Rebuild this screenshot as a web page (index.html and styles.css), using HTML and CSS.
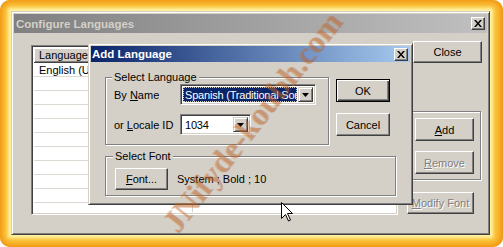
FILE: index.html
```html
<!DOCTYPE html>
<html lang="en">
<head>
    <meta charset="UTF-8">
    <meta name="viewport" content="width=device-width, initial-scale=1.0">
    <title>Configure Languages</title>
    <link rel="stylesheet" href="styles.css">
</head>
<body>
    <div class="frame">
        <div class="window">
            <div class="titlebar inactive">
                <span>Configure Languages</span>
                <span class="cap-btn">
                    <svg width="8" height="7" viewBox="0 0 8 7"><path d="M0 0h2l2 2.5L6 0h2L5 3.5 8 7H6L4 4.5 2 7H0l3-3.5z"/></svg>
                </span>
            </div>
            <div class="window-body">
                <div class="listview">
                    <div class="list-header">
                        <span class="col col-lang">Language</span>
                        <span class="col col-font">Font</span>
                    </div>
                    <div class="list-rows">
                        <div class="row">English (United States)</div>
                    </div>
                </div>
                <div class="side">
                    <button class="btn btn-close">Close</button>
                    <div class="group side-group">
                        <button class="btn btn-side"><u>A</u>dd</button>
                        <button class="btn btn-side btn-remove" disabled><u>R</u>emove</button>
                    </div>
                    <button class="btn btn-modify" disabled><u>M</u>odify Font</button>
                </div>
            </div>
        </div>

        <div class="dialog">
            <div class="titlebar active">
                <span>Add Language</span>
                <span class="cap-btn">
                    <svg width="8" height="7" viewBox="0 0 8 7"><path d="M0 0h2l2 2.5L6 0h2L5 3.5 8 7H6L4 4.5 2 7H0l3-3.5z"/></svg>
                </span>
            </div>
            <div class="dialog-body">
                <div class="top-row">
                    <div class="group lang-group">
                        <span class="group-title">Select Language</span>
                        <div class="field">
                            <span class="label">By <u>N</u>ame</span>
                            <div class="combo combo-name">
                                <span class="combo-text selected">Spanish (Traditional Sort)</span>
                                <span class="combo-arrow"><svg width="7" height="4" viewBox="0 0 7 4"><path d="M0 0h7L3.5 4z"/></svg></span>
                            </div>
                        </div>
                        <div class="field field-locale">
                            <span class="label">or <u>L</u>ocale ID</span>
                            <div class="combo combo-locale">
                                <span class="combo-text">1034</span>
                                <span class="combo-arrow"><svg width="7" height="4" viewBox="0 0 7 4"><path d="M0 0h7L3.5 4z"/></svg></span>
                            </div>
                        </div>
                    </div>
                    <div class="dialog-buttons">
                        <button class="btn btn-default">OK</button>
                        <button class="btn btn-cancel">Cancel</button>
                    </div>
                </div>
                <div class="group font-group">
                    <span class="group-title">Select Font</span>
                    <div class="font-row">
                        <button class="btn btn-font"><u>F</u>ont...</button>
                        <span class="font-desc">System ; Bold ; 10</span>
                    </div>
                </div>
            </div>
        </div>

        <span class="watermark">JNifyde-koubh.com</span>

        <svg class="cursor" width="12" height="20" viewBox="0 0 12 20">
            <path d="M0.5 0.5V16.5L4.5 12.5L7.5 19L9.5 18L6.5 11.5H11.5Z" fill="#fff" stroke="#000"/>
        </svg>
    </div>
</body>
</html>
```

FILE: styles.css
```css
body {
    margin: 0;
    font-family: "Liberation Sans", Arial, sans-serif;
    font-size: 11px;
    color: #000;
    background: #fff;
}
.frame {
    position: relative;
    width: 503px;
    height: 247px;
    box-sizing: border-box;
    padding: 11px 13px 12px 11px;
    background: #f7ac24;
    border-radius: 10px;
    box-shadow: inset 0 0 5px 2px #ef8f0c;
    overflow: hidden;
}
.window {
    height: 100%;
    box-sizing: border-box;
    display: flex;
    flex-direction: column;
    padding: 2px;
    background: #d4d0c8;
    border: 1px solid;
    border-color: #d4d0c8 #404040 #404040 #d4d0c8;
    box-shadow: inset 1px 1px 0 #fff, inset -1px -1px 0 #808080,
        0 0 3px 3px #fff1a0, 0 0 8px 6px #fcd04c;
}
.titlebar {
    display: flex;
    align-items: center;
    justify-content: space-between;
    font-weight: bold;
    font-size: 11.5px;
}
.inactive {
    height: 19px;
    padding: 0 2px 0 2px;
    background: linear-gradient(to right, #808080, #c0c0c0);
    color: #d4d0c8;
}
.active {
    height: 16px;
    padding: 0 2px 0 1px;
    background: linear-gradient(to right, #0a246a, #a6caf0);
    color: #fff;
}
.cap-btn {
    width: 14px;
    height: 13px;
    box-sizing: border-box;
    display: flex;
    align-items: center;
    justify-content: center;
    background: #d4d0c8;
    border: 1px solid;
    border-color: #fff #404040 #404040 #fff;
    box-shadow: inset -1px -1px 0 #808080;
}
.window-body {
    display: flex;
    align-items: flex-start;
    padding: 8px 0 0 17px;
}
.listview {
    width: 367px;
    height: 170px;
    margin-top: 4px;
    box-sizing: border-box;
    display: flex;
    flex-direction: column;
    background: #fff;
    border: 1px solid;
    border-color: #808080 #fff #fff #808080;
    box-shadow: inset 1px 1px 0 #404040, inset -1px -1px 0 #d4d0c8;
    padding: 2px;
}
.list-header {
    display: flex;
    height: 15px;
}
.col {
    box-sizing: border-box;
    display: flex;
    align-items: center;
    padding-left: 5px;
    background: #d4d0c8;
    border-right: 1px solid #404040;
    border-bottom: 1px solid #404040;
    box-shadow: inset 1px 1px 0 #fff, inset -1px -1px 0 #808080;
}
.col-lang {
    width: 159px;
}
.col-font {
    flex: 1;
}
.list-rows {
    flex: 1;
    background-image:
        linear-gradient(#d4d0c8, #d4d0c8),
        repeating-linear-gradient(to bottom, transparent 0 13px, #dcd9d2 13px 14px);
    background-size: 1px 100%, 100% 100%;
    background-position: 158px 0, 0 0;
    background-repeat: no-repeat;
}
.row {
    height: 14px;
    line-height: 14px;
    padding-left: 5px;
    white-space: nowrap;
}
.side {
    display: flex;
    flex-direction: column;
    align-items: flex-start;
    width: 75px;
    margin-left: 9px;
}
.btn {
    box-sizing: border-box;
    display: flex;
    align-items: center;
    justify-content: center;
    padding: 0;
    font: inherit;
    color: #000;
    background: #d4d0c8;
    border: 1px solid;
    border-color: #fff #404040 #404040 #fff;
    box-shadow: inset -1px -1px 0 #808080;
}
.btn:disabled {
    color: #808080;
    text-shadow: 1px 1px 0 #fff;
}
.btn-close {
    width: 69px;
    height: 22px;
    margin-left: 6px;
}
.group {
    box-sizing: border-box;
    border: 1px solid #808080;
    box-shadow: inset 1px 1px 0 #fff, 1px 1px 0 #fff;
}
.side-group {
    width: 74px;
    height: 69px;
    margin-top: 48px;
    padding: 6px 0 0 7px;
}
.btn-side {
    width: 59px;
    height: 23px;
}
.btn-remove {
    margin-top: 10px;
}
.btn-modify {
    width: 67px;
    height: 22px;
    margin-top: 12px;
}
.dialog {
    position: absolute;
    left: 88px;
    top: 43px;
    width: 325px;
    height: 162px;
    box-sizing: border-box;
    padding: 2px;
    background: #d4d0c8;
    border: 1px solid;
    border-color: #d4d0c8 #404040 #404040 #d4d0c8;
    box-shadow: inset 1px 1px 0 #fff, inset -1px -1px 0 #808080;
}
.dialog-body {
    padding: 15px 0 0 14px;
}
.top-row {
    display: flex;
    align-items: flex-start;
}
.group-title {
    display: block;
    width: fit-content;
    height: 13px;
    line-height: 13px;
    margin: -7px 0 0 -2px;
    padding: 0 2px;
    background: #d4d0c8;
}
.lang-group {
    width: 224px;
    height: 68px;
    padding-left: 8px;
}
.field {
    display: flex;
    align-items: center;
    height: 21px;
}
.field-locale {
    margin-top: 9px;
}
.label {
    width: 66px;
}
.combo {
    box-sizing: border-box;
    height: 21px;
    display: flex;
    align-items: stretch;
    padding: 2px;
    background: #fff;
    border: 1px solid;
    border-color: #808080 #fff #fff #808080;
    box-shadow: inset 1px 1px 0 #404040, inset -1px -1px 0 #d4d0c8;
}
.combo-name {
    width: 136px;
}
.combo-locale {
    width: 71px;
}
.combo-text {
    flex: 1;
    display: flex;
    align-items: center;
    padding-left: 2px;
    margin-right: 1px;
    overflow: hidden;
    white-space: nowrap;
    letter-spacing: -0.2px;
}
.selected {
    background: #0a246a;
    color: #fff;
    outline: 1px dotted #d4d0c8;
    outline-offset: -1px;
}
.combo-arrow {
    width: 15px;
    box-sizing: border-box;
    display: flex;
    align-items: center;
    justify-content: center;
    background: #d4d0c8;
    border: 1px solid;
    border-color: #d4d0c8 #404040 #404040 #d4d0c8;
    box-shadow: inset 1px 1px 0 #fff, inset -1px -1px 0 #808080;
}
.dialog-buttons {
    display: flex;
    flex-direction: column;
    margin: 2px 0 0 7px;
}
.btn-default,
.btn-cancel {
    width: 54px;
    height: 23px;
}
.btn-default {
    border: 1px solid #000;
    box-shadow: inset 1px 1px 0 #fff, inset -1px -1px 0 #404040, inset -2px -2px 0 #808080;
}
.btn-cancel {
    margin-top: 11px;
}
.font-group {
    width: 291px;
    height: 40px;
    margin-top: 11px;
    padding-left: 9px;
}
.font-row {
    display: flex;
    align-items: center;
    margin-top: 5px;
}
.btn-font {
    width: 53px;
    height: 22px;
}
.font-desc {
    margin-left: 9px;
}
.watermark {
    position: absolute;
    left: 252px;
    top: 122px;
    transform: translate(-50%, -50%) rotate(-52deg);
    font-family: "Liberation Serif", serif;
    font-weight: bold;
    font-size: 32px;
    white-space: nowrap;
    color: rgba(218, 120, 50, 0.36);
    text-shadow: 1px 1px 0 rgba(140, 60, 15, 0.28);
    pointer-events: none;
}
.cursor {
    position: absolute;
    left: 281px;
    top: 202px;
}
```
